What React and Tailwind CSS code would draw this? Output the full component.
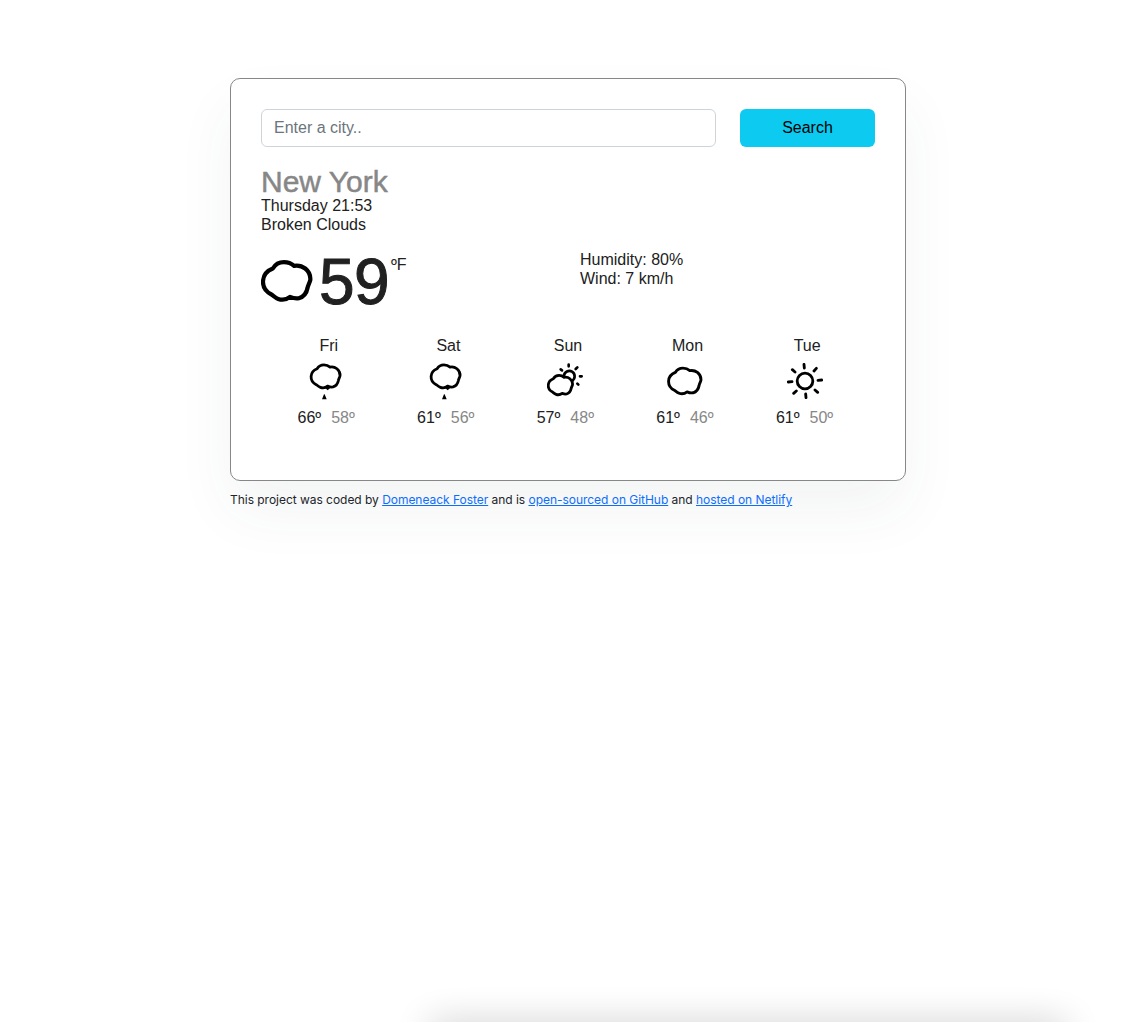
const CLOUD =
  "M69 85 C76 73 88 66 102 66 C114 66 124 70 132 77 C143 75 156 78 165 85 C176 94 181 107 180 119 C178 128 173 134 172 142 C169 158 160 169 146 173 C136 175 127 172 120 169 C110 177 96 179 85 175 C76 172 71 166 65 162 C49 154 39 139 40 122 C41 106 51 92 69 85 Z";

function Cloud({ className }) {
  return (
    <svg viewBox="34 57 154 130" className={className} fill="none" stroke="#000" strokeLinejoin="round">
      <path d={CLOUD} strokeWidth="12.5" />
    </svg>
  );
}

function Rain() {
  return (
    <svg viewBox="57 98 108 114" className="ml-px block h-[38px] w-[36px]">
      <g transform="translate(38.5 62.5) scale(0.62)">
        <path d={CLOUD} fill="none" stroke="#000" strokeWidth="13.5" strokeLinejoin="round" />
      </g>
      <path d="M103 171 L113 163 L123 171 L113 180 Z M102 192 H104 L110 207 H96 Z" fill="#000" />
    </svg>
  );
}

function PartlyCloudy() {
  return (
    <svg viewBox="51 98 108 105" className="block h-[35px] w-[36px]" fill="none" stroke="#000" strokeWidth="8" strokeLinecap="round">
      <path d="M102 136 A16 16 0 1 1 127 151" />
      <path d="M116 103 V108 M137 116 L142 111 M150 138 H155 M142 160 L145 163 M92 117 L96 120" />
      <g transform="translate(34 101) scale(0.52)">
        <path d={CLOUD} strokeWidth="16" strokeLinejoin="round" />
      </g>
    </svg>
  );
}

function Sun() {
  return (
    <svg viewBox="141 99 108 108" className="ml-px block size-9" fill="none" stroke="#000" strokeWidth="8.5" strokeLinecap="round">
      <circle cx="195" cy="153" r="23.5" />
      <path d="M192 103 L193 114 M229 115 L222 123 M245 150 L234 151 M233 187 L225 180 M198 203 L197 192 M161 190 L169 183 M145 156 L156 155 M157 119 L165 126" />
    </svg>
  );
}

const days = [
  { day: "Fri", icon: <Rain />, high: 66, low: 58 },
  { day: "Sat", icon: <Rain />, high: 61, low: 56 },
  { day: "Sun", icon: <PartlyCloudy />, high: 57, low: 48 },
  { day: "Mon", icon: <Cloud className="mt-[3px] block h-[30px] w-[36px]" />, high: 61, low: 46 },
  { day: "Tue", icon: <Sun />, high: 61, low: 50 },
];

function FooterLink({ children }) {
  return (
    <a href="#" className="text-[#0d6efd] underline">
      {children}
    </a>
  );
}

export default function App() {
  return (
    <div className="flex h-[1022px] flex-col justify-between overflow-hidden bg-white font-['Liberation_Sans',Arial,sans-serif] text-base leading-[19px] text-[#212529]">
      <div className="mx-auto w-[676px] pt-[78px]">
        <main className="h-[403px] rounded-[10px] border border-[#878787] bg-white p-[30px] text-[#212121] shadow-[0_30px_60px_rgba(44,62,70,0.06)]">
          <form className="flex gap-6" onSubmit={(e) => e.preventDefault()}>
            <input
              type="search"
              placeholder="Enter a city.."
              className="h-[38px] w-[455px] rounded-md border border-[#ced4da] px-3 placeholder:text-[#6c757d]"
            />
            <button className="h-[38px] w-[135px] rounded-md bg-[#0dcaf0] pb-[2px] text-black">Search</button>
          </form>

          <h1 className="mt-[17px] h-8 text-[30px] leading-[36px] text-[#878787] [-webkit-text-stroke:0.5px_#878787]">New York</h1>
          <p>Thursday 21:53</p>
          <p>Broken Clouds</p>

          <section className="mt-4 flex h-[70px]">
            <div className="flex w-[319px]">
              <Cloud className="mt-[8.5px] block h-[44px] w-[52px]" />
              <span className="ml-[6px] mt-[4px] w-[70px] text-[64px] leading-[56px] tracking-[-0.5px] [-webkit-text-stroke:1px_#212121]">59</span>
              <span className="ml-[2px] mt-[5px]">ºF</span>
            </div>
            <div>
              <p>Humidity: 80%</p>
              <p>Wind: 7 km/h</p>
            </div>
          </section>

          <section className="ml-2 mt-4 grid w-[598px] grid-cols-5">
            {days.map(({ day, icon, high, low }) => (
              <div key={day} className="text-center">
                <p>{day}</p>
                <div className="ml-[39px] mt-[8px] flex h-[45px] items-start">{icon}</div>
                <p className="flex gap-[10px] pl-[28.5px]">
                  <span>{high}º</span>
                  <span className="text-[#878787]">{low}º</span>
                </p>
              </div>
            ))}
          </section>
        </main>
        <small className="relative mt-[9px] block whitespace-nowrap font-[Inter,sans-serif] text-[12px] leading-[19px] tracking-[-0.033px]">
          This project was coded by <FooterLink>Domeneack Foster</FooterLink> and is{" "}
          <FooterLink>open-sourced on GitHub</FooterLink> and <FooterLink>hosted on Netlify</FooterLink>
        </small>
      </div>
      <div className="-mb-5 ml-[430px] h-5 w-[636px] shadow-[0_2px_36px_rgba(0,0,0,0.24)]" />
    </div>
  );
}
